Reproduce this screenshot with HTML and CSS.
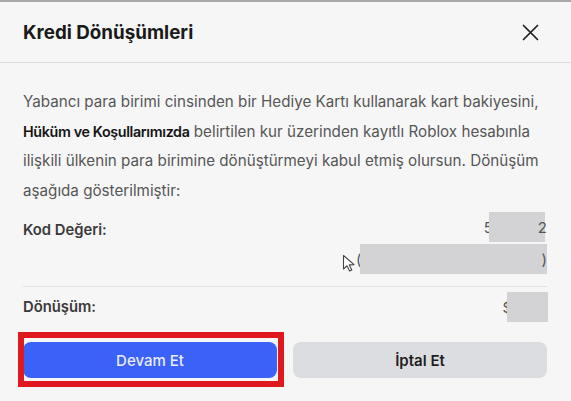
FILE: index.html
```html
<!DOCTYPE html>
<html lang="tr">
<head>
<meta charset="utf-8">
<title>Kredi Dönüşümleri</title>
<link rel="stylesheet" href="styles.css">
</head>
<body>
<div class="modal">
  <header class="modal-header">
    <h1 class="title">Kredi Dönüşümleri</h1>
    <button class="close" aria-label="Kapat">
      <svg width="17" height="17" viewBox="0 0 17 17"><path d="M1.5 1.5 L15.5 15.5 M15.5 1.5 L1.5 15.5" stroke="#1f1f1f" stroke-width="1.7" stroke-linecap="round" fill="none"/></svg>
    </button>
  </header>
  <div class="modal-body">
    <p class="desc">Yabancı para birimi cinsinden bir Hediye Kartı kullanarak kart bakiyesini, <strong>Hüküm ve Koşullarımızda</strong> belirtilen kur üzerinden kayıtlı Roblox hesabınla ilişkili ülkenin para birimine dönüştürmeyi kabul etmiş olursun. Dönüşüm aşağıda gösterilmiştir:</p>
    <div class="row row-code">
      <span class="label">Kod Değeri:</span>
      <div class="values">
        <div class="value"><span class="peek">5</span><span class="mask mask-a"></span><span class="peek">2</span></div>
        <div class="value"><svg class="cursor" width="15" height="18" viewBox="0 0 15 18"><path d="M1.5 1.5 L1.5 15 L5 11.8 L7.6 17 L9.8 16 L7.3 10.9 L12 10.6 Z" fill="#fff" stroke="#444" stroke-width="1.1" stroke-linejoin="round"/></svg><span class="peek">(</span><span class="mask mask-b"></span><span class="peek">)</span></div>
      </div>
    </div>
    <div class="row row-conv">
      <span class="label">Dönüşüm:</span>
      <div class="value"><span class="peek">$</span><span class="mask mask-c"></span></div>
    </div>
    <div class="actions">
      <button class="btn btn-primary">Devam Et</button>
      <button class="btn btn-secondary">İptal Et</button>
      <span class="highlight" aria-hidden="true"></span>
    </div>
  </div>
</div>
</body>
</html>
```
FILE: styles.css
```css
* { box-sizing: border-box; }
html, body { margin: 0; padding: 0; }
body {
  width: 571px;
  height: 401px;
  overflow: hidden;
  background: #f6f6f6;
  font-family: Inter, "Noto Sans", sans-serif;
  color: #1c1c1c;
}
.modal {
  border-top: 2px solid #a9a9a9;
  background: #f6f6f6;
  height: 401px;
}
.modal-header {
  height: 61px;
  display: flex;
  align-items: center;
  justify-content: space-between;
  padding: 0 32px 0 23px;
  border-bottom: 1.5px solid #dcdcdc;
}
.title {
  margin: 0;
  font-size: 18.8px;
  font-weight: 700;
  color: #1a1a1a;
}
.close {
  border: 0;
  background: none;
  padding: 0;
  width: 17px;
  height: 17px;
  display: flex;
}
.modal-body {
  padding: 24px 24px 0 23px;
}
.desc {
  margin: 0 -10px 0 0;
  font-size: 15.2px;
  line-height: 29.5px;
  color: #575757;
}
.desc strong {
  color: #141414;
  font-weight: 600;
  font-size: 14.3px;
  letter-spacing: -0.35px;
}
.row {
  display: flex;
  justify-content: space-between;
}
.label {
  font-size: 14.8px;
  font-weight: 600;
  color: #3a3a3a;
}
.row-code {
  margin-top: 7px;
  padding-bottom: 12px;
  border-bottom: 1.5px solid #e2e2e2;
}
.row-code .label { margin-top: 9px; }
.values {
  display: flex;
  flex-direction: column;
  align-items: flex-end;
  gap: 2px;
}
.value {
  display: flex;
  align-items: center;
  height: 30px;
  font-size: 15px;
  color: #555;
}
.peek { display: inline-block; }
.mask { display: inline-block; background: #d3d3d5; height: 30px; }
.mask-a { width: 56px; margin-left: -4px; margin-right: -7px; }
.mask-b { width: 187px; margin-left: -2px; margin-right: -5px; }
.mask-c { width: 41px; margin-left: -5px; }
.cursor { margin-right: -1px; margin-top: 8px; }
.row-conv {
  margin-top: 5px;
  align-items: center;
}
.row-conv .value { margin-right: -1px; }
.actions {
  position: relative;
  display: grid;
  grid-template-columns: 1fr 1fr;
  gap: 16px;
  margin-top: 20px;
}
.btn {
  height: 36px;
  border: 0;
  border-radius: 8px;
  font-family: Inter, "Noto Sans", sans-serif;
  font-size: 15px;
  font-weight: 500;
}
.btn-primary {
  background: #3a61f8;
  color: #e9edff;
}
.btn-secondary {
  background: #dcdde1;
  color: #1e1e1e;
  font-weight: 600;
}
.highlight {
  position: absolute;
  left: -5px;
  top: -10px;
  width: 266px;
  height: 55px;
  border: 6px solid #e0191f;
  pointer-events: none;
}
```
